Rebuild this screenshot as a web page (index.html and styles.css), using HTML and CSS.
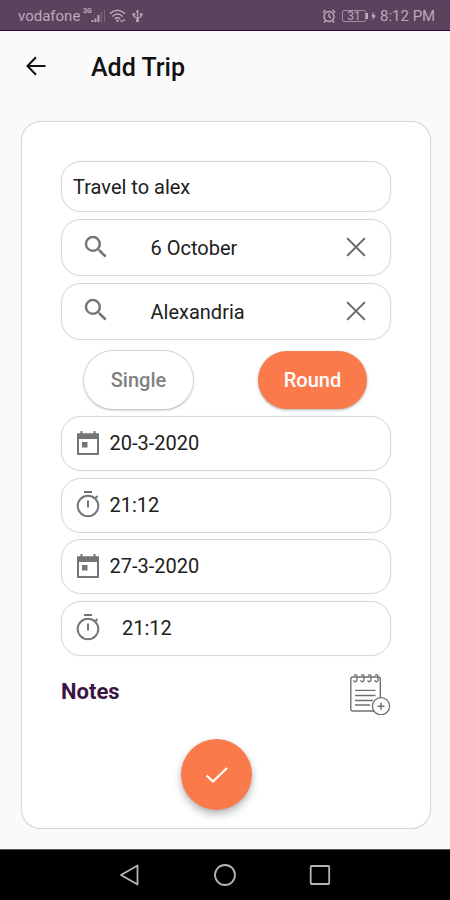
FILE: index.html
```html
<!DOCTYPE html>
<html lang="en">
<head>
<meta charset="utf-8">
<title>Add Trip</title>
<link rel="stylesheet" href="styles.css">
</head>
<body>
<svg class="defs" aria-hidden="true">
  <symbol id="search" viewBox="0 0 24 24"><path fill="currentColor" d="M15.5 14h-.79l-.28-.27A6.47 6.47 0 0 0 16 9.5 6.5 6.5 0 1 0 9.5 16c1.61 0 3.09-.59 4.23-1.57l.27.28v.79l5 4.99L20.49 19l-4.99-5zm-6 0C7.01 14 5 11.99 5 9.5S7.01 5 9.5 5 14 7.01 14 9.5 11.99 14 9.5 14z"/></symbol>
  <symbol id="close" viewBox="0 0 18 18"><path d="M1 1l16 16M17 1L1 17" fill="none" stroke="currentColor" stroke-width="1.8"/></symbol>
  <symbol id="calendar" viewBox="0 0 24 26"><path d="M2 4.5h20v19.5H2z" fill="none" stroke="currentColor" stroke-width="2" stroke-linejoin="round"/><path d="M1 3.5h22V9H1zM4.5 1h2v4h-2zM17.5 1h2v4h-2zM6 12h5.5v5.500H6z" fill="currentColor"/></symbol>
  <symbol id="timer" viewBox="0 0 24 28"><g fill="none" stroke="currentColor" stroke-width="2"><circle cx="12" cy="16" r="10.300"/><path d="M8 2h8M12 10.500v7M19 8.500l2.500-2.500"/></g></symbol>
</svg>
<header class="status">
  <span class="carrier">vodafone</span>
  <span class="network">3G</span>
  <svg class="signal" viewBox="0 0 15 14"><path d="M1.500 13v-2M4.500 13V9.500M7.500 13V6" stroke="currentColor" stroke-width="2"/><path d="M10.500 13V3M13.500 13V1" stroke="currentColor" opacity=".35"/></svg>
  <svg class="wifi" viewBox="0 0 18 14"><path d="M1 4.500Q9-2.500 17 4.500M3.500 7.500Q9 2.500 14.500 7.500M6 10Q9 7.500 12 10" fill="none" stroke="currentColor" stroke-width="1.500"/><circle cx="9" cy="12" r="1.300" fill="currentColor"/><path d="M12 12h5l-2-2M12 12l2 1.500" fill="none" stroke="currentColor"/></svg>
  <svg class="usb" viewBox="0 0 12 14"><path d="M6 2v10M2 5v2.500l4 2.500 4-2.500V5" fill="none" stroke="currentColor" stroke-width="1.300"/><path d="M6 0l2 3H4zM.5 4h3v2.500h-3zM8.500 4h3v2.500h-3z" fill="currentColor"/><circle cx="6" cy="12" r="1.700" fill="currentColor"/></svg>
  <span class="spacer"></span>
  <svg class="alarm" viewBox="0 0 14 14"><g fill="none" stroke="currentColor" stroke-width="1.400"><circle cx="7" cy="7.500" r="5"/><path d="M7 4.500v3l2 1.500M.8 3.500L3.500 1M13.200 3.500L10.500 1M3.500 11.500L2 13.500M10.500 11.500l1.500 2"/></g></svg>
  <span class="battery">31</span>
  <svg class="bolt" viewBox="0 0 6 10"><path d="M3.500 0L0 5.500h2.200L2 10l4-5.800H3.500z" fill="currentColor"/></svg>
  <span class="clock">8:12 PM</span>
</header>
<div class="toolbar">
  <svg class="back" viewBox="0 0 20 20"><path d="M19.500 10H1.500M10 1.300L1.500 10l8.500 8.700" fill="none" stroke="currentColor" stroke-width="2"/></svg>
  <h1>Add Trip</h1>
</div>
<main class="card">
  <div class="field name"><span>Travel to alex</span></div>
  <div class="field place"><svg class="search"><use href="#search"/></svg><span>6 October</span><svg class="close"><use href="#close"/></svg></div>
  <div class="field place"><svg class="search"><use href="#search"/></svg><span>Alexandria</span><svg class="close"><use href="#close"/></svg></div>
  <div class="choices">
    <button class="choice">Single</button>
    <button class="choice selected">Round</button>
  </div>
  <div class="field when"><svg class="calendar"><use href="#calendar"/></svg><span>20-3-2020</span></div>
  <div class="field when"><svg class="timer"><use href="#timer"/></svg><span>21:12</span></div>
  <div class="field when"><svg class="calendar"><use href="#calendar"/></svg><span>27-3-2020</span></div>
  <div class="field when inset"><svg class="timer"><use href="#timer"/></svg><span>21:12</span></div>
  <div class="notes">
    <h2>Notes</h2>
    <svg class="notepad" viewBox="0 0 42 42"><g fill="none" stroke="#707070"><rect x="1.800" y="4" width="29.500" height="34" rx="2" stroke-width="1.400"/><path d="M6 17.300h20.500M6 22.500h20.500M6 27.500h18M6 32h15" stroke-width="1.300"/><path d="M5 2.500q3-2 3 1v4q-3 3-3-.5M12 2.500q3-2 3 1v4q-3 3-3-.5M19 2.500q3-2 3 1v4q-3 3-3-.5M26 2.500q3-2 3 1v4q-3 3-3-.5" stroke-width="1.300"/><circle cx="32" cy="33.200" r="8.600" fill="#fff" stroke-width="1.300"/><path d="M28.500 33.200h7M32 29.700v7" stroke-width="1.500"/></g></svg>
  </div>
  <button class="confirm" aria-label="Save trip"><svg viewBox="0 0 24 18"><path d="M1.500 9.500l6.500 6L22 2" fill="none" stroke="#fff" stroke-width="2.200"/></svg></button>
</main>
<nav class="navbar">
  <svg viewBox="0 0 22 22"><path d="M18.500 1.500v19L2 11z" /></svg>
  <svg viewBox="0 0 22 22"><circle cx="11" cy="11" r="10"/></svg>
  <svg viewBox="0 0 22 22"><rect x="1.700" y="2" width="18.500" height="18" rx="1"/></svg>
</nav>
</body>
</html>
```
FILE: styles.css
```css
* { box-sizing: border-box; }
body {
  margin: 0;
  height: 900px;
  display: flex;
  flex-direction: column;
  overflow: hidden;
  background: #fafafa;
  color: #202020;
  font-family: Roboto, sans-serif;
}
svg { display: block; flex: none; }
button { font-family: inherit; padding: 0; border: 0; }
.defs { display: none; }

.status {
  height: 31px;
  flex: none;
  display: flex;
  align-items: center;
  padding: 2px 15px 0 18px;
  background: #5d425d;
  border-bottom: 1px solid #35053d;
  color: #bba9bb;
  font-size: 15px;
}
.carrier { width: 65px; white-space: nowrap; }
.network { width: 8px; font-size: 7px; font-weight: 700; align-self: flex-start; margin-top: 5px; }
.signal { width: 15px; height: 14px; }
.wifi { width: 17px; height: 14px; margin-left: 3px; }
.usb { width: 11px; height: 14px; margin-left: 6px; }
.spacer { flex: 1; }
.alarm { width: 14px; height: 14px; }
.battery {
  position: relative;
  width: 24px;
  height: 12px;
  margin: 0 5px 0 6px;
  border: 1px solid #a18ea1;
  border-radius: 2px;
  font-size: 12px;
  line-height: 10.500px;
  text-align: center;
}
.battery::after {
  content: "";
  position: absolute;
  right: -3px;
  top: 2px;
  width: 2px;
  height: 6px;
  background: #bba9bb;
}
.bolt { width: 5px; height: 10px; margin-right: 4px; }
.clock { width: 55px; white-space: nowrap; }

.toolbar {
  height: 90px;
  flex: none;
  display: flex;
  align-items: flex-start;
  padding: 21px 0 0 26px;
  color: #111;
}
.back { width: 20px; height: 20px; margin: 3.500px 45px 0 0; }
h1 { margin: 0; font-size: 25px; line-height: 32px; font-weight: 500; }

.card {
  width: 410px;
  height: 708px;
  flex: none;
  display: flex;
  flex-direction: column;
  margin-left: 21px;
  padding: 39px 38px 0 39px;
  background: #fff;
  border: 1px solid #d9d9d9;
  box-shadow: 0 0 1px #d0d0d0;
  border-radius: 20px;
}
.field {
  width: 330px;
  height: 55px;
  flex: none;
  display: flex;
  align-items: center;
  margin-bottom: 6.500px;
  border: 1px solid #d9d9d9;
  box-shadow: 0 0 1px #d0d0d0;
  border-radius: 20px;
  font-size: 20px;
  line-height: 24px;
}
.field svg { color: #757575; }
.name { height: 51px; margin-bottom: 7px; padding-left: 11px; }
.place { height: 57px; margin-bottom: 6.500px; padding: 0 24px; }
.search { width: 30px; height: 30px; margin: -2px 36px 0 -5px; }
.place span { flex: 1; padding: 1px 0 0 3.500px; }
.place .close { width: 20px; height: 20px; margin-top: -1px; color: #686868; }
.when { padding-left: 14px; }
.when span { margin-top: -1px; }
.calendar, .timer { width: 24px; height: 26px; margin: -2px 9.500px 0 0; }
.timer { height: 28px; }
.inset .timer { margin-right: 22px; }

.choices {
  display: flex;
  justify-content: space-between;
  padding: 4px 24px 0 22px;
  height: 70px;
  flex: none;
}
.choice {
  width: 111px;
  height: 60px;
  border: 1px solid #d5d5d5;
  border-bottom-color: #c8c8c8;
  border-radius: 30px;
  background: #fff;
  color: #808080;
  font-size: 20px;
  font-weight: 500;
  box-shadow: 0 1px 2px #ddd;
}
.selected {
  width: 109px;
  height: 58px;
  margin-top: 1px;
  margin-right: 1px;
  border: 0;
  background: #fb7a4c;
  color: #fff;
  box-shadow: 0 1px 3px #aaa;
}

.notes {
  display: flex;
  justify-content: space-between;
  height: 42px;
  width: 330px;
  margin-top: 12px;
  flex: none;
}
h2 { margin: 0; color: #3b1645; font-size: 22px; line-height: 36px; font-weight: 700; }
.notepad { width: 42px; height: 42px; margin-top: -1px; }
.confirm {
  width: 71px;
  height: 71px;
  flex: none;
  display: grid;
  place-items: center;
  margin: 23px 0 0 120px;
  border-radius: 50%;
  background: #fb7a4c;
  box-shadow: 0 5px 8px #0000003d, 0 1px 4px #0000001c;
}
.confirm svg { width: 24px; height: 18px; }

.navbar {
  height: 51px;
  flex: none;
  display: flex;
  align-items: center;
  justify-content: center;
  gap: 73px;
  margin-top: 20px;
  background: #000;
  border-top: 1px solid #555;
}
.navbar svg { width: 22px; height: 22px; fill: none; stroke: #b5b5b5; stroke-width: 1.800; stroke-linejoin: round; }
```
